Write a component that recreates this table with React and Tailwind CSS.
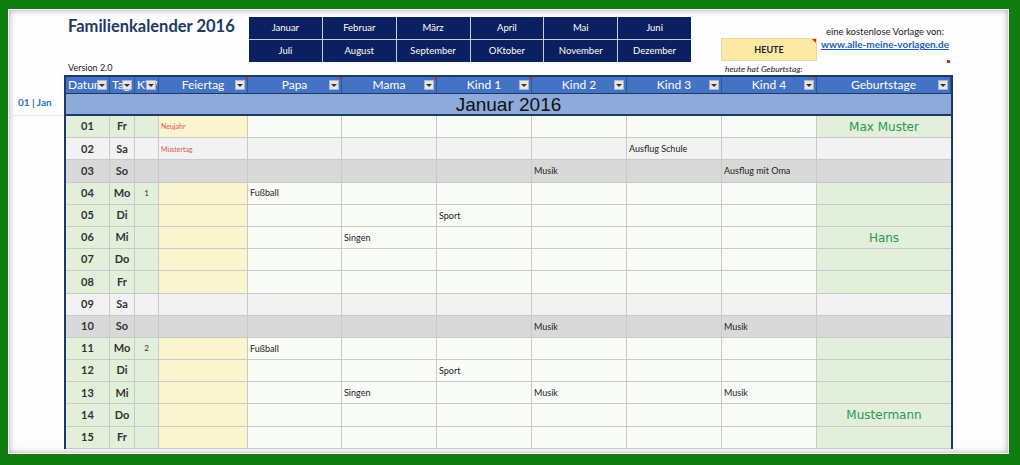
import React from "react";

const months = [
  "Januar", "Februar", "März", "April", "Mai", "Juni",
  "Juli", "August", "September", "OKtober", "November", "Dezember",
];

const cols = [
  { name: "Datum", left: true },
  { name: "Tag", left: true },
  { name: "KW", left: true },
  { name: "Feiertag", mark: true },
  { name: "Papa", mark: true },
  { name: "Mama", mark: true },
  { name: "Kind 1", mark: true },
  { name: "Kind 2" },
  { name: "Kind 3" },
  { name: "Kind 4", mark: true },
  { name: "Geburtstage" },
];

// [datum, tag, kw, feiertag, papa, mama, kind1, kind2, kind3, kind4, geburtstag]
const rows = [
  ["01", "Fr", "", "Neujahr", "", "", "", "", "", "", "Max Muster"],
  ["02", "Sa", "", "Mustertag", "", "", "", "", "Ausflug Schule", "", ""],
  ["03", "So", "", "", "", "", "", "Musik", "", "Ausflug mit Oma", ""],
  ["04", "Mo", "1", "", "Fußball", "", "", "", "", "", ""],
  ["05", "Di", "", "", "", "", "Sport", "", "", "", ""],
  ["06", "Mi", "", "", "", "Singen", "", "", "", "", "Hans"],
  ["07", "Do", "", "", "", "", "", "", "", "", ""],
  ["08", "Fr", "", "", "", "", "", "", "", "", ""],
  ["09", "Sa", "", "", "", "", "", "", "", "", ""],
  ["10", "So", "", "", "", "", "", "Musik", "", "Musik", ""],
  ["11", "Mo", "2", "", "Fußball", "", "", "", "", "", ""],
  ["12", "Di", "", "", "", "", "Sport", "", "", "", ""],
  ["13", "Mi", "", "", "", "Singen", "", "Musik", "", "Musik", ""],
  ["14", "Do", "", "", "", "", "", "", "", "", "Mustermann"],
  ["15", "Fr", "", "", "", "", "", "", "", "", ""],
];

const gridCols = "grid grid-cols-[44px_25px_24px_89px_94px_95px_95px_95px_95px_95px_134px]";

function cellBg(day, i) {
  if (day === "Sa") return "bg-[#f2f2f2]";
  if (day === "So") return "bg-[#d9d9d9]";
  if (i <= 2 || i === 10) return "bg-[#e2efda]";
  if (i === 3) return "bg-[#fbf5cf]";
  return "bg-[#f8fbf6]";
}

function cellText(i) {
  if (i <= 1) return "justify-center font-bold text-[11px] text-[#333]";
  if (i === 2) return "justify-center text-[8px] text-[#333]";
  if (i === 3) return "pl-[2px] text-[7px] text-[#e5534f]";
  if (i === 10) return "justify-center text-[12px] text-[#2a9a4e] font-['Comic_Sans_MS','DejaVu_Sans',sans-serif]";
  return "pl-[2px] text-[9px] text-[#222]";
}

function Filter() {
  return (
    <div className="absolute right-[2px] top-[3px] w-[10px] h-[10px] bg-[#e6e6e6] border border-[#a9b4c8] flex items-center justify-center">
      <div className="w-0 h-0 border-l-[3px] border-r-[3px] border-t-[3px] border-l-transparent border-r-transparent border-t-[#333]" />
    </div>
  );
}

export default function App() {
  return (
    <div className="w-[1020px] h-[465px] bg-[#107d10] pt-[9px] pl-[8px] pr-[11px] pb-[11px] font-['Lato',sans-serif]">
      <div className="w-full h-full border border-white bg-[#fcfdfc] shadow-[inset_0_0_6px_rgba(0,0,0,0.35)] overflow-hidden flex flex-col">
        {/* top area */}
        <div className="flex h-[65px] shrink-0 pl-[55px]">
          <div className="w-[185px] h-full flex flex-col justify-between pl-[4px] pb-[2px]">
            <h1 className="mt-[6px] text-[16.5px] font-bold text-[#1f3864] leading-[20px]">Familienkalender 2016</h1>
            <span className="text-[9px] text-[#222] leading-[11px]">Version 2.0</span>
          </div>
          <div className="w-[442px] h-[45px] mt-[7px] grid grid-cols-6 gap-px bg-[#c9cdd9]">
            {months.map((m) => (
              <div key={m} className="bg-[#0b2060] text-white text-[9.5px] flex items-center justify-center">
                {m}
              </div>
            ))}
          </div>
          <div className="w-[96px] ml-[30px] flex flex-col">
            <div className="relative mt-[28px] h-[23px] bg-[#fde9a6] border border-[#e6d9a8] flex items-center justify-center text-[9px] font-bold text-[#222]">
              HEUTE
              <div className="absolute right-0 top-0 w-0 h-0 border-l-[4px] border-b-[4px] border-l-transparent border-b-transparent border-t-[4px] border-t-[#d12b2b]" />
            </div>
            <span className="mt-[3px] pl-[4px] text-[8.5px] italic text-[#222] leading-[10px]">heute hat Geburtstag:</span>
          </div>
          <div className="w-[136px] flex flex-col items-center pt-[16px]">
            <span className="text-[9.5px] text-[#222] leading-[12px]">eine kostenlose Vorlage von:</span>
            <span className="text-[10px] font-bold text-[#1d5fb4] underline leading-[12px]">www.alle-meine-vorlagen.de</span>
            <div className="self-end mr-[3px] mt-[10px] w-[3px] h-[3px] bg-[#d12b2b]" />
          </div>
        </div>

        {/* table area */}
        <div className="flex">
          <div className="w-[55px] shrink-0">
            <div className="h-[41px] border-b border-[#e6e6e6] pt-[21px] pl-[9px] text-[10px] font-bold text-[#2e75b6] leading-[12px] whitespace-pre">
              01 | Jan
            </div>
          </div>
          <div className="w-[889px] border-l-2 border-r-2 border-[#1f3864]">
            <div className={`${gridCols} h-[19px] border-t-2 border-b border-[#1f3864] bg-[#4472c4]`}>
              {cols.map((c) => (
                <div
                  key={c.name}
                  className={`relative overflow-hidden flex items-center whitespace-nowrap text-white text-[12px] leading-none border-r border-[#2f5597] ${c.left ? "pl-[2px]" : "justify-center"}`}
                >
                  {c.name}
                  <Filter />
                  {c.mark && (
                    <div className="absolute right-0 top-0 w-0 h-0 border-l-[3px] border-l-transparent border-t-[3px] border-t-[#c0392b]" />
                  )}
                </div>
              ))}
            </div>
            <div className="h-[22px] bg-[#8eaadb] border-b-2 border-[#1f3864] flex items-center justify-center font-['Liberation_Sans',sans-serif] text-[19px] text-[#111] leading-none">
              Januar 2016
            </div>
            {rows.map((r) => (
              <div key={r[0]} className={`${gridCols} h-[22.2px]`}>
                {r.map((v, i) => (
                  <div
                    key={i}
                    className={`flex items-center overflow-hidden whitespace-nowrap border-b border-[#c9c9c9] ${i < 10 ? "border-r" : ""} ${cellBg(r[1], i)} ${cellText(i)}`}
                  >
                    {v}
                  </div>
                ))}
              </div>
            ))}
          </div>
        </div>
      </div>
    </div>
  );
}
